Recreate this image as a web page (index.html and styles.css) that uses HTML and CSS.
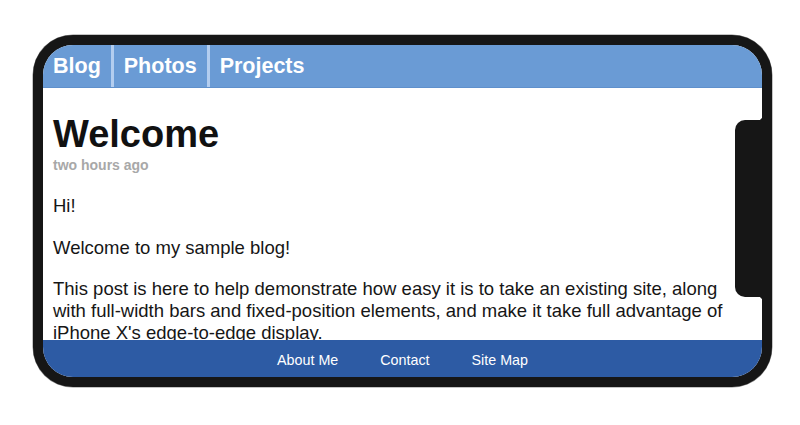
FILE: index.html
```html
<!DOCTYPE html>
<html>
<head>
<meta charset="utf-8">
<link rel="stylesheet" href="styles.css">
</head>
<body>
<div class="device">
  <div class="screen">
    <nav class="topnav">
      <a class="navlink">Blog</a>
      <a class="navlink">Photos</a>
      <a class="navlink last">Projects</a>
    </nav>
    <main class="content">
      <h1 class="title">Welcome</h1>
      <div class="date">two hours ago</div>
      <p class="para">Hi!</p>
      <p class="para">Welcome to my sample blog!</p>
      <p class="para">This post is here to help demonstrate how easy it is to take an existing site, along with full-width bars and fixed-position elements, and make it take full advantage of iPhone X's edge-to-edge display.</p>
    </main>
    <footer class="footer">
      <a class="footlink">About Me</a>
      <a class="footlink">Contact</a>
      <a class="footlink">Site Map</a>
    </footer>
    <div class="notch"></div>
  </div>
</div>
</body>
</html>
```
FILE: styles.css
```css
html, body {
  margin: 0;
  padding: 0;
  background: #ffffff;
  width: 800px;
  height: 425px;
  overflow: hidden;
}
body {
  font-family: "Liberation Sans", Arial, Helvetica, sans-serif;
  padding-top: 35px;
  padding-left: 33px;
  box-sizing: border-box;
}
.device {
  width: 739px;
  height: 352px;
  box-sizing: border-box;
  border: 10px solid #161616;
  border-radius: 40px;
  background: #161616;
  box-shadow: 0 0 0 0.5px #8a8a8a;
}
.screen {
  position: relative;
  width: 719px;
  height: 332px;
  border-radius: 30px;
  overflow: hidden;
  background: #ffffff;
  display: flex;
  flex-direction: column;
}
.topnav {
  flex: 0 0 43px;
  height: 43px;
  background: #6a9bd5;
  display: flex;
  align-items: stretch;
  box-sizing: border-box;
  border-bottom: 1px solid #5f90cc;
}
.navlink {
  display: block;
  padding: 0 10px;
  color: #ffffff;
  font-weight: bold;
  font-size: 21.5px;
  line-height: 42px;
  border-right: 3px solid #b3cdef;
}
.navlink.last {
  border-right: none;
}
.content {
  flex: 1 1 auto;
  overflow: hidden;
  padding: 24px 27px 0 10px;
  color: #161616;
}
.title {
  margin: 0;
  font-size: 38px;
  line-height: 44px;
  font-weight: bold;
  color: #111111;
}
.date {
  margin: 1px 0 21px;
  font-size: 14px;
  line-height: 17px;
  font-weight: bold;
  color: #a8a8a8;
}
.para {
  margin: 0 0 19.5px;
  font-size: 18.5px;
  line-height: 22px;
}
.footer {
  flex: 0 0 37px;
  height: 37px;
  box-sizing: border-box;
  padding-top: 4px;
  background: #2d5ba4;
  display: flex;
  justify-content: center;
  gap: 42px;
}
.footlink {
  color: #ffffff;
  font-size: 14.3px;
  line-height: 33px;
}
.notch {
  position: absolute;
  right: 0;
  top: 75px;
  width: 27px;
  height: 177px;
  background: #161616;
  border-radius: 10px 0 0 10px;
}
.notch::before,
.notch::after {
  content: "";
  position: absolute;
  right: 0;
  width: 4px;
  height: 4px;
}
.notch::before {
  top: -4px;
  background: radial-gradient(circle at 0 0, transparent 4px, #161616 4.5px);
}
.notch::after {
  bottom: -4px;
  background: radial-gradient(circle at 0 100%, transparent 4px, #161616 4.5px);
}
```
